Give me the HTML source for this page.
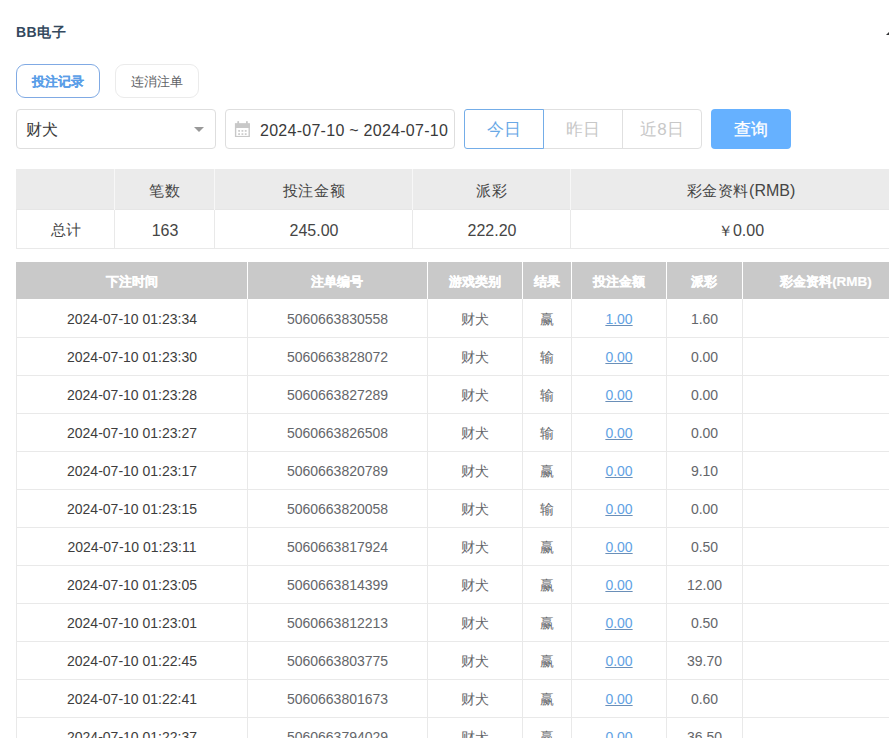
<!DOCTYPE html>
<html><head><meta charset="utf-8">
<style>
* { box-sizing: border-box; margin:0; padding:0; }
html, body { width:889px; height:738px; overflow:hidden; background:#fff; }
body { font-family: "Liberation Sans", sans-serif; position:relative; color:#303133; }
div { position:absolute; }
.title { left:16px; top:23px; font-size:14px; font-weight:bold; color:#34495e; line-height:18px; letter-spacing:0.5px; white-space:nowrap; }
.caret-up { left:886px; top:29px; width:0; height:0; border-left:6px solid transparent; border-right:6px solid transparent; border-bottom:6px solid #303133; }
.tab { top:64px; height:34px; width:84px; border:1px solid #ebebeb; border-radius:9px; font-size:13px; color:#606266; text-align:center; line-height:34px; white-space:nowrap; }
.tab.active { border-color:#80aae4; color:#5a9ee8; font-weight:bold; -webkit-text-stroke:0.1px #5a9ee8; }
.sel { left:16px; top:109px; width:200px; height:40px; border:1px solid #dedede; border-radius:4px; }
.sel span { position:absolute; left:9px; top:1px; line-height:38px; font-size:16px; color:#3a3a3a; }
.sel i { position:absolute; left:177px; top:17px; width:0; height:0; border-left:5.5px solid transparent; border-right:5.5px solid transparent; border-top:5.5px solid #999; }
.date { left:225px; top:109px; width:230px; height:40px; border:1px solid #dedede; border-radius:4px; }
.date span { position:absolute; left:34px; top:2px; line-height:38px; font-size:16px; color:#3a3a3a; white-space:nowrap; letter-spacing:0.27px; }
.grp { top:109px; height:40px; font-size:17px; text-align:center; line-height:40px; color:#c8c8c8; border:1px solid #e0e0e0; white-space:nowrap; }
.btn { left:711px; top:109px; width:80px; height:40px; background:#66b1ff; border-radius:4px; color:#fff; font-size:17px; text-align:center; line-height:42px; -webkit-text-stroke:0.3px #fff; }
.scell { padding-left:2px; text-align:center; font-size:15px; color:#454545; white-space:nowrap; }
.sh { letter-spacing:0.6px; top:169px; height:41px; background:#ebebeb; line-height:44px; border-bottom:1px solid #e6e6e6; }
.sb { top:210px; height:39px; line-height:42px; border-bottom:1px solid #e9e9e9; }
.scell .lat { font-size:16px; letter-spacing:0; }
.svl { top:210px; height:39px; width:1px; background:#e9e9e9; }
.svh { top:169px; height:41px; width:1px; background:#f7f7f7; }
.hcell { top:262px; height:37px; background:#c9c9c9; color:#fff; font-weight:bold; font-size:13px; line-height:39px; -webkit-text-stroke:0.3px #fff; text-align:center; white-space:nowrap; }
.hcell .lat { font-size:13.5px; -webkit-text-stroke:0.2px #fff; }
.hvl { top:262px; height:37px; width:1px; background:#fff; }
.cell { height:38px; line-height:40px; padding-left:1px; text-align:center; font-size:14px; color:#64666a; white-space:nowrap; }
.d1 { color:#3d3d3d; }
.cell a { color:#62a2e4; text-decoration:underline; text-decoration-color:#6a8fb8; }
.hl { left:16px; width:894px; height:1px; background:#e9e9e9; }
.vl { top:299px; height:460px; width:1px; background:#e9e9e9; }
</style></head><body>
<div class="title">BB电子</div>
<div class="caret-up"></div>
<div class="tab active" style="left:16px">投注记录</div>
<div class="tab" style="left:115px">连消注单</div>
<div class="sel"><span>财犬</span><i></i></div>
<div class="date"><span>2024-07-10 ~ 2024-07-10</span></div>
<svg width="16" height="16" viewBox="0 0 16 16" style="position:absolute;left:234px;top:121px">
<rect x="1" y="2.5" width="14.8" height="4.5" fill="#c8c8c8"/>
<rect x="1.6" y="3" width="13.6" height="12.6" fill="none" stroke="#c8c8c8" stroke-width="1.4"/>
<rect x="3.3" y="0" width="1.8" height="4" rx="0.8" fill="#c8c8c8"/>
<rect x="12" y="0" width="1.8" height="4" rx="0.8" fill="#c8c8c8"/>
<g fill="#cdcdcd">
<rect x="4.2" y="9" width="1.8" height="1.8"/><rect x="7.5" y="9" width="1.8" height="1.8"/><rect x="10.8" y="9" width="1.8" height="1.8"/>
<rect x="4.2" y="12.2" width="1.8" height="1.8"/><rect x="7.5" y="12.2" width="1.8" height="1.8"/><rect x="10.8" y="12.2" width="1.8" height="1.8"/>
</g></svg>
<div class="grp" style="left:464px;width:80px;border-color:#74ade8;color:#6aa9e6;border-radius:3px 0 0 3px;z-index:2">今日</div>
<div class="grp" style="left:543px;width:80px;border-left:none">昨日</div>
<div class="grp" style="left:622px;width:80px;border-radius:0 4px 4px 0">近8日</div>
<div class="btn">查询</div>
<div class="scell sh" style="left:16px;width:98px"></div>
<div class="scell sb" style="left:16px;width:98px"><span style="position:relative;top:-1px">总计</span></div>
<div class="scell sh" style="left:114px;width:100px">笔数</div>
<div class="scell sb" style="left:114px;width:100px"><span class="lat">163</span></div>
<div class="scell sh" style="left:214px;width:198px">投注金额</div>
<div class="scell sb" style="left:214px;width:198px"><span class="lat">245.00</span></div>
<div class="scell sh" style="left:412px;width:158px">派彩</div>
<div class="scell sb" style="left:412px;width:158px"><span class="lat">222.20</span></div>
<div class="scell sh" style="left:570px;width:340px">彩金资料<span class="lat">(RMB)</span></div>
<div class="scell sb" style="left:570px;width:340px"><span class="yen">￥</span><span class="lat">0.00</span></div>
<div class="svl" style="left:16px"></div>
<div class="svl" style="left:114px"></div>
<div class="svl" style="left:214px"></div>
<div class="svl" style="left:412px"></div>
<div class="svl" style="left:570px"></div>
<div class="svh" style="left:114px"></div>
<div class="svh" style="left:214px"></div>
<div class="svh" style="left:412px"></div>
<div class="svh" style="left:570px"></div>
<div class="hcell" style="left:16px;width:231px">下注时间</div>
<div class="hcell" style="left:247px;width:180px">注单编号</div>
<div class="hcell" style="left:427px;width:95px">游戏类别</div>
<div class="hcell" style="left:522px;width:49px">结果</div>
<div class="hcell" style="left:571px;width:95px">投注金额</div>
<div class="hcell" style="left:666px;width:76px">派彩</div>
<div class="hcell" style="left:742px;width:168px">彩金资料<span class="lat">(RMB)</span></div>
<div class="hvl" style="left:247px"></div>
<div class="hvl" style="left:427px"></div>
<div class="hvl" style="left:522px"></div>
<div class="hvl" style="left:571px"></div>
<div class="hvl" style="left:666px"></div>
<div class="hvl" style="left:742px"></div>
<div class="cell d1" style="left:16px;top:299px;width:231px">2024-07-10 01:23:34</div>
<div class="cell d2" style="left:247px;top:299px;width:180px">5060663830558</div>
<div class="cell d3" style="left:427px;top:299px;width:95px">财犬</div>
<div class="cell d4" style="left:522px;top:299px;width:49px">赢</div>
<div class="cell d5" style="left:571px;top:299px;width:95px"><a>1.00</a></div>
<div class="cell d6" style="left:666px;top:299px;width:76px">1.60</div>
<div class="cell d7" style="left:742px;top:299px;width:168px"></div>
<div class="cell d1" style="left:16px;top:337px;width:231px">2024-07-10 01:23:30</div>
<div class="cell d2" style="left:247px;top:337px;width:180px">5060663828072</div>
<div class="cell d3" style="left:427px;top:337px;width:95px">财犬</div>
<div class="cell d4" style="left:522px;top:337px;width:49px">输</div>
<div class="cell d5" style="left:571px;top:337px;width:95px"><a>0.00</a></div>
<div class="cell d6" style="left:666px;top:337px;width:76px">0.00</div>
<div class="cell d7" style="left:742px;top:337px;width:168px"></div>
<div class="cell d1" style="left:16px;top:375px;width:231px">2024-07-10 01:23:28</div>
<div class="cell d2" style="left:247px;top:375px;width:180px">5060663827289</div>
<div class="cell d3" style="left:427px;top:375px;width:95px">财犬</div>
<div class="cell d4" style="left:522px;top:375px;width:49px">输</div>
<div class="cell d5" style="left:571px;top:375px;width:95px"><a>0.00</a></div>
<div class="cell d6" style="left:666px;top:375px;width:76px">0.00</div>
<div class="cell d7" style="left:742px;top:375px;width:168px"></div>
<div class="cell d1" style="left:16px;top:413px;width:231px">2024-07-10 01:23:27</div>
<div class="cell d2" style="left:247px;top:413px;width:180px">5060663826508</div>
<div class="cell d3" style="left:427px;top:413px;width:95px">财犬</div>
<div class="cell d4" style="left:522px;top:413px;width:49px">输</div>
<div class="cell d5" style="left:571px;top:413px;width:95px"><a>0.00</a></div>
<div class="cell d6" style="left:666px;top:413px;width:76px">0.00</div>
<div class="cell d7" style="left:742px;top:413px;width:168px"></div>
<div class="cell d1" style="left:16px;top:451px;width:231px">2024-07-10 01:23:17</div>
<div class="cell d2" style="left:247px;top:451px;width:180px">5060663820789</div>
<div class="cell d3" style="left:427px;top:451px;width:95px">财犬</div>
<div class="cell d4" style="left:522px;top:451px;width:49px">赢</div>
<div class="cell d5" style="left:571px;top:451px;width:95px"><a>0.00</a></div>
<div class="cell d6" style="left:666px;top:451px;width:76px">9.10</div>
<div class="cell d7" style="left:742px;top:451px;width:168px"></div>
<div class="cell d1" style="left:16px;top:489px;width:231px">2024-07-10 01:23:15</div>
<div class="cell d2" style="left:247px;top:489px;width:180px">5060663820058</div>
<div class="cell d3" style="left:427px;top:489px;width:95px">财犬</div>
<div class="cell d4" style="left:522px;top:489px;width:49px">输</div>
<div class="cell d5" style="left:571px;top:489px;width:95px"><a>0.00</a></div>
<div class="cell d6" style="left:666px;top:489px;width:76px">0.00</div>
<div class="cell d7" style="left:742px;top:489px;width:168px"></div>
<div class="cell d1" style="left:16px;top:527px;width:231px">2024-07-10 01:23:11</div>
<div class="cell d2" style="left:247px;top:527px;width:180px">5060663817924</div>
<div class="cell d3" style="left:427px;top:527px;width:95px">财犬</div>
<div class="cell d4" style="left:522px;top:527px;width:49px">赢</div>
<div class="cell d5" style="left:571px;top:527px;width:95px"><a>0.00</a></div>
<div class="cell d6" style="left:666px;top:527px;width:76px">0.50</div>
<div class="cell d7" style="left:742px;top:527px;width:168px"></div>
<div class="cell d1" style="left:16px;top:565px;width:231px">2024-07-10 01:23:05</div>
<div class="cell d2" style="left:247px;top:565px;width:180px">5060663814399</div>
<div class="cell d3" style="left:427px;top:565px;width:95px">财犬</div>
<div class="cell d4" style="left:522px;top:565px;width:49px">赢</div>
<div class="cell d5" style="left:571px;top:565px;width:95px"><a>0.00</a></div>
<div class="cell d6" style="left:666px;top:565px;width:76px">12.00</div>
<div class="cell d7" style="left:742px;top:565px;width:168px"></div>
<div class="cell d1" style="left:16px;top:603px;width:231px">2024-07-10 01:23:01</div>
<div class="cell d2" style="left:247px;top:603px;width:180px">5060663812213</div>
<div class="cell d3" style="left:427px;top:603px;width:95px">财犬</div>
<div class="cell d4" style="left:522px;top:603px;width:49px">赢</div>
<div class="cell d5" style="left:571px;top:603px;width:95px"><a>0.00</a></div>
<div class="cell d6" style="left:666px;top:603px;width:76px">0.50</div>
<div class="cell d7" style="left:742px;top:603px;width:168px"></div>
<div class="cell d1" style="left:16px;top:641px;width:231px">2024-07-10 01:22:45</div>
<div class="cell d2" style="left:247px;top:641px;width:180px">5060663803775</div>
<div class="cell d3" style="left:427px;top:641px;width:95px">财犬</div>
<div class="cell d4" style="left:522px;top:641px;width:49px">赢</div>
<div class="cell d5" style="left:571px;top:641px;width:95px"><a>0.00</a></div>
<div class="cell d6" style="left:666px;top:641px;width:76px">39.70</div>
<div class="cell d7" style="left:742px;top:641px;width:168px"></div>
<div class="cell d1" style="left:16px;top:679px;width:231px">2024-07-10 01:22:41</div>
<div class="cell d2" style="left:247px;top:679px;width:180px">5060663801673</div>
<div class="cell d3" style="left:427px;top:679px;width:95px">财犬</div>
<div class="cell d4" style="left:522px;top:679px;width:49px">赢</div>
<div class="cell d5" style="left:571px;top:679px;width:95px"><a>0.00</a></div>
<div class="cell d6" style="left:666px;top:679px;width:76px">0.60</div>
<div class="cell d7" style="left:742px;top:679px;width:168px"></div>
<div class="cell d1" style="left:16px;top:717px;width:231px">2024-07-10 01:22:37</div>
<div class="cell d2" style="left:247px;top:717px;width:180px">5060663794029</div>
<div class="cell d3" style="left:427px;top:717px;width:95px">财犬</div>
<div class="cell d4" style="left:522px;top:717px;width:49px">赢</div>
<div class="cell d5" style="left:571px;top:717px;width:95px"><a>0.00</a></div>
<div class="cell d6" style="left:666px;top:717px;width:76px">36.50</div>
<div class="cell d7" style="left:742px;top:717px;width:168px"></div>
<div class="hl" style="top:337px"></div>
<div class="hl" style="top:375px"></div>
<div class="hl" style="top:413px"></div>
<div class="hl" style="top:451px"></div>
<div class="hl" style="top:489px"></div>
<div class="hl" style="top:527px"></div>
<div class="hl" style="top:565px"></div>
<div class="hl" style="top:603px"></div>
<div class="hl" style="top:641px"></div>
<div class="hl" style="top:679px"></div>
<div class="hl" style="top:717px"></div>
<div class="hl" style="top:755px"></div>
<div class="hl" style="top:793px"></div>
<div class="vl" style="left:16px"></div>
<div class="vl" style="left:247px"></div>
<div class="vl" style="left:427px"></div>
<div class="vl" style="left:522px"></div>
<div class="vl" style="left:571px"></div>
<div class="vl" style="left:666px"></div>
<div class="vl" style="left:742px"></div>
</body></html>
